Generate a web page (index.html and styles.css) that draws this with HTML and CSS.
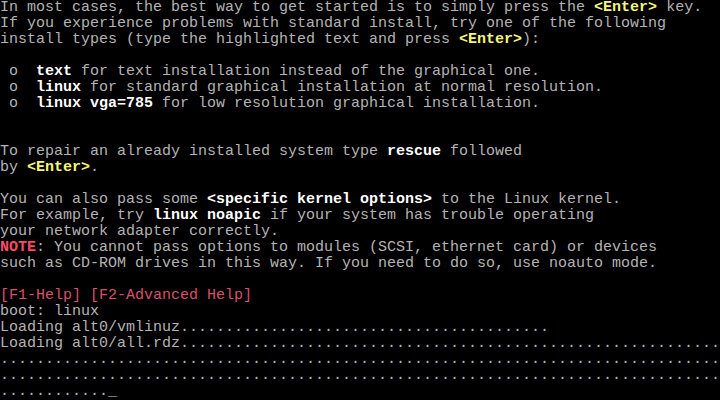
FILE: index.html
```html
<!DOCTYPE html>
<html lang="en">
<head>
    <meta charset="UTF-8">
    <meta name="viewport" content="width=device-width, initial-scale=1.0">
    <title>Boot</title>
    <link rel="stylesheet" href="styles.css">
</head>
<body>
<pre class="screen">In most cases, the best way to get started is to simply press the <span class="key">&lt;Enter&gt;</span> key.
If you experience problems with standard install, try one of the following
install types (type the highlighted text and press <span class="key">&lt;Enter&gt;</span>):

 o  <span class="hl">text</span> for text installation instead of the graphical one.
 o  <span class="hl">linux</span> for standard graphical installation at normal resolution.
 o  <span class="hl">linux vga=785</span> for low resolution graphical installation.


To repair an already installed system type <span class="hl">rescue</span> followed
by <span class="key">&lt;Enter&gt;</span>.

You can also pass some <span class="hl">&lt;specific kernel options&gt;</span> to the Linux kernel.
For example, try <span class="hl">linux noapic</span> if your system has trouble operating
your network adapter correctly.
<span class="warn">NOTE</span>: You cannot pass options to modules (SCSI, ethernet card) or devices
such as CD-ROM drives in this way. If you need to do so, use noauto mode.

<span class="help">[F1-Help] [F2-Advanced Help]</span>
boot: linux
Loading alt0/vmlinuz.........................................
Loading alt0/all.rdz............................................................
................................................................................
................................................................................
............<span class="cursor">_</span></pre>
</body>
</html>
```

FILE: styles.css
```css
* {
    margin: 0;
    padding: 0;
    box-sizing: border-box;
}

html, body {
    background: #000;
    width: 720px;
    height: 400px;
    overflow: hidden;
}

.screen {
    font-family: "Liberation Mono", "DejaVu Sans Mono", monospace;
    font-size: 15px;
    line-height: 16px;
    color: #b4b4b4;
    white-space: pre;
}

.hl {
    color: #ffffff;
    font-weight: bold;
}

.key {
    color: #f6f67a;
    font-weight: bold;
}

.warn {
    color: #ff4a6a;
    font-weight: bold;
}

.help {
    color: #d8506a;
}

.cursor {
    color: #d0d0d0;
    font-weight: bold;
}
```
